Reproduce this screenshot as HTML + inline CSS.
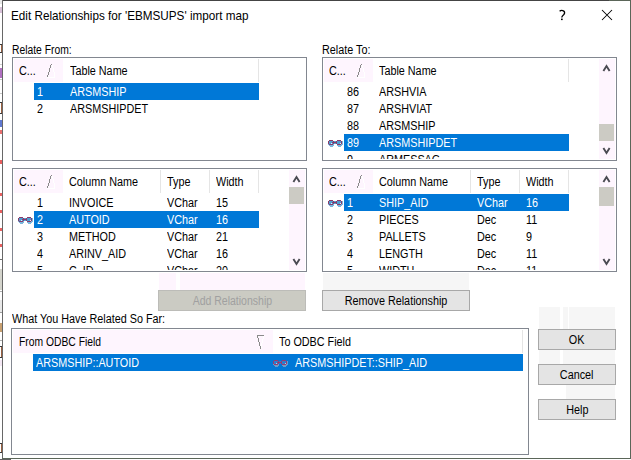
<!DOCTYPE html>
<html><head><meta charset="utf-8"><style>
html,body{margin:0;padding:0;width:631px;height:460px;overflow:hidden;background:#fff;}
body{position:relative;font-family:"Liberation Sans",sans-serif;}
.a{position:absolute;box-sizing:content-box;}
.t{position:absolute;white-space:nowrap;font-size:12px;line-height:14px;transform-origin:0 0;}
.c{text-align:center;}
</style></head><body>
<div class="a" style="left:0px;top:0px;width:631px;height:460px;background:#fff;"></div>
<div class="a" style="left:2px;top:0px;width:629px;height:1px;background:#444;"></div>
<div class="a" style="left:609px;top:0px;width:22px;height:1px;background:#5b6659;"></div>
<div class="a" style="left:2px;top:0px;width:1px;height:459px;background:#676767;"></div>
<div class="a" style="left:630px;top:0px;width:1px;height:459px;background:#5b6659;"></div>
<div class="a" style="left:2px;top:458px;width:629px;height:1px;background:#5b6659;"></div>
<div class="a" style="left:0px;top:0px;width:2px;height:4px;background:#e8e8e8;"></div>
<div class="a" style="left:0px;top:7px;width:2px;height:6px;background:#d8c0d8;"></div>
<div class="a" style="left:0px;top:64px;width:2px;height:1px;background:#d0d0d0;"></div>
<div class="a" style="left:0px;top:68px;width:2px;height:10px;background:#b070c0;"></div>
<div class="a" style="left:0px;top:79px;width:2px;height:1px;background:#c8c8c8;"></div>
<div class="a" style="left:0px;top:93px;width:2px;height:1px;background:#c8c8c8;"></div>
<div class="a" style="left:0px;top:120px;width:2px;height:7px;background:#6078d0;"></div>
<div class="a" style="left:0px;top:130px;width:2px;height:4px;background:#e87070;"></div>
<div class="a" style="left:0px;top:160px;width:2px;height:4px;background:#e86060;"></div>
<div class="a" style="left:0px;top:193px;width:2px;height:3px;background:#e86060;"></div>
<div class="a" style="left:0px;top:210px;width:2px;height:3px;background:#e86060;"></div>
<div class="a" style="left:0px;top:228px;width:2px;height:3px;background:#e86060;"></div>
<div class="a" style="left:0px;top:244px;width:2px;height:3px;background:#e86060;"></div>
<div class="a" style="left:0px;top:259px;width:2px;height:1px;background:#707070;"></div>
<div class="a" style="left:0px;top:269px;width:2px;height:21px;background:#d4d4cc;"></div>
<div class="a" style="left:0px;top:291px;width:2px;height:1px;background:#b0b0b0;"></div>
<div class="a" style="left:0px;top:300px;width:2px;height:12px;background:#e8e8e8;"></div>
<div class="a" style="left:0px;top:312px;width:2px;height:1px;background:#a0a0a0;"></div>
<div class="a" style="left:0px;top:323px;width:2px;height:9px;background:#c8a070;"></div>
<div class="a" style="left:0px;top:340px;width:2px;height:1px;background:#b0b0b0;"></div>
<div class="a" style="left:0px;top:360px;width:2px;height:6px;background:#f4e8f4;"></div>
<div class="a" style="left:0px;top:44px;width:2px;height:1px;background:#383838;"></div>
<div class="a" style="left:1px;top:45px;width:1px;height:7px;background:#9a6040;"></div>
<div class="a" style="left:0px;top:52px;width:2px;height:1px;background:#383838;"></div>
<div class="a" style="left:0px;top:102px;width:2px;height:1px;background:#383838;"></div>
<div class="a" style="left:1px;top:103px;width:1px;height:10px;background:#9a6040;"></div>
<div class="a" style="left:0px;top:113px;width:2px;height:1px;background:#383838;"></div>
<div class="a" style="left:0px;top:346px;width:2px;height:1px;background:#383838;"></div>
<div class="a" style="left:1px;top:347px;width:1px;height:10px;background:#9a6040;"></div>
<div class="a" style="left:0px;top:357px;width:2px;height:1px;background:#383838;"></div>
<div class="a" style="left:0px;top:443px;width:2px;height:1px;background:#383838;"></div>
<div class="a" style="left:1px;top:444px;width:1px;height:8px;background:#9a6040;"></div>
<div class="a" style="left:0px;top:452px;width:2px;height:1px;background:#383838;"></div>
<div class="a" style="left:0px;top:459px;width:11px;height:1px;background:#606060;"></div>
<div class="t" style="left:11px;top:8.5px;color:#000;font-size:12.6px;transform:scaleX(0.93);">Edit Relationships for &#39;EBMSUPS&#39; import map</div>
<svg class="a" style="left:555px;top:6px;" width="16" height="16"><path d="M4.6 5.3 C5.6 4.4 7.6 4.3 8.8 5.1 C10 6 9.8 7.7 8.6 8.7 C7.4 9.6 6.8 10.2 6.8 11.6" stroke="#000" stroke-width="1.35" fill="none"/><rect x="6" y="12.6" width="1.7" height="1.5" fill="#000"/></svg>
<svg class="a" style="left:601px;top:9px;" width="13" height="13"><path d="M1 1 L11 11 M11 1 L1 11" stroke="#000" stroke-width="1.05"/></svg>
<div class="t" style="left:12px;top:43px;color:#000;font-size:12px;transform:scaleX(0.86);">Relate From:</div>
<div class="t" style="left:322px;top:43px;color:#000;font-size:12px;transform:scaleX(0.9);">Relate To:</div>
<div class="a" style="left:12px;top:57px;width:293px;height:102px;border:1px solid #828790;background:#fff;"></div>
<div class="a" style="left:13px;top:58px;width:293px;height:101px;overflow:hidden">
<div class="a" style="left:1px;top:1px;width:49px;height:23px;background:#fef5fe;"></div>
<div class="t" style="left:6px;top:6px;color:#000;font-size:12px;transform:scaleX(0.9);">C...</div>
<svg class="a" style="left:34px;top:6px;" width="9" height="15"><g shape-rendering="crispEdges"><rect x="4" y="0" width="1" height="1" fill="#8a8a8a"/><rect x="3" y="1" width="1" height="3" fill="#8a8a8a"/><rect x="2" y="4" width="1" height="4" fill="#8a8a8a"/><rect x="1" y="8" width="1" height="3" fill="#8a8a8a"/><rect x="0" y="11" width="1" height="2" fill="#8a8a8a"/><rect x="5" y="1" width="1" height="3" fill="#fff"/><rect x="6" y="4" width="1" height="4" fill="#fff"/><rect x="7" y="8" width="1" height="5" fill="#fff"/><rect x="0" y="13" width="8" height="1" fill="#fff"/></g></svg>
<div class="t" style="left:57px;top:6px;color:#000;font-size:12px;transform:scaleX(0.9);">Table Name</div>
<div class="a" style="left:245px;top:1px;width:1px;height:23px;background:#e5e5e5;"></div>
<div class="a" style="left:21px;top:25px;width:225px;height:17px;background:#0078d7;"></div>
<div class="t" style="left:24px;top:27px;color:#fff;font-size:12px;transform:scaleX(0.9);">1</div>
<div class="t" style="left:57px;top:27px;color:#fff;font-size:12px;transform:scaleX(0.9);">ARSMSHIP</div>
<div class="t" style="left:24px;top:44px;color:#000;font-size:12px;transform:scaleX(0.9);">2</div>
<div class="t" style="left:57px;top:44px;color:#000;font-size:12px;transform:scaleX(0.9);">ARSMSHIPDET</div>
</div>
<div class="a" style="left:322px;top:57px;width:293px;height:102px;border:1px solid #828790;background:#fff;"></div>
<div class="a" style="left:323px;top:58px;width:293px;height:101px;overflow:hidden">
<div class="a" style="left:1px;top:1px;width:49px;height:23px;background:#fef5fe;"></div>
<div class="t" style="left:6px;top:6px;color:#000;font-size:12px;transform:scaleX(0.9);">C...</div>
<svg class="a" style="left:34px;top:6px;" width="9" height="15"><g shape-rendering="crispEdges"><rect x="4" y="0" width="1" height="1" fill="#8a8a8a"/><rect x="3" y="1" width="1" height="3" fill="#8a8a8a"/><rect x="2" y="4" width="1" height="4" fill="#8a8a8a"/><rect x="1" y="8" width="1" height="3" fill="#8a8a8a"/><rect x="0" y="11" width="1" height="2" fill="#8a8a8a"/><rect x="5" y="1" width="1" height="3" fill="#fff"/><rect x="6" y="4" width="1" height="4" fill="#fff"/><rect x="7" y="8" width="1" height="5" fill="#fff"/><rect x="0" y="13" width="8" height="1" fill="#fff"/></g></svg>
<div class="t" style="left:56px;top:6px;color:#000;font-size:12px;transform:scaleX(0.9);">Table Name</div>
<div class="a" style="left:245px;top:1px;width:1px;height:23px;background:#e5e5e5;"></div>
<div class="t" style="left:24px;top:27px;color:#000;font-size:12px;transform:scaleX(0.9);">86</div>
<div class="t" style="left:56px;top:27px;color:#000;font-size:12px;transform:scaleX(0.9);">ARSHVIA</div>
<div class="t" style="left:24px;top:44px;color:#000;font-size:12px;transform:scaleX(0.9);">87</div>
<div class="t" style="left:56px;top:44px;color:#000;font-size:12px;transform:scaleX(0.9);">ARSHVIAT</div>
<div class="t" style="left:24px;top:61px;color:#000;font-size:12px;transform:scaleX(0.9);">88</div>
<div class="t" style="left:56px;top:61px;color:#000;font-size:12px;transform:scaleX(0.9);">ARSMSHIP</div>
<div class="a" style="left:21px;top:76px;width:225px;height:17px;background:#0078d7;"></div>
<svg class="a" style="left:5px;top:82px;" width="16" height="8"><g shape-rendering="crispEdges"><rect x="1" y="1" width="4" height="3" fill="#4f9fd0"/><rect x="9" y="1" width="4" height="3" fill="#4f9fd0"/><rect x="6" y="1" width="2" height="3" fill="#4f9fd0"/><rect x="1" y="5" width="5" height="1" fill="#7ab8de"/><rect x="9" y="5" width="5" height="1" fill="#7ab8de"/><rect x="2" y="6" width="3" height="1" fill="#7ab8de"/><rect x="10" y="6" width="3" height="1" fill="#7ab8de"/><rect x="0" y="4" width="1" height="1" fill="#7ab8de"/><rect x="13" y="4" width="2" height="1" fill="#7ab8de"/><rect x="5" y="4" width="1" height="1" fill="#7ab8de"/><rect x="14" y="1" width="1" height="3" fill="#7ab8de"/><rect x="3" y="3" width="1" height="1" fill="#e4f2fa"/><rect x="12" y="3" width="1" height="1" fill="#e4f2fa"/><rect x="1" y="0" width="4" height="1" fill="#8a3a6c"/><rect x="9" y="0" width="4" height="1" fill="#8a3a6c"/><rect x="0" y="1" width="1" height="3" fill="#8a3a6c"/><rect x="13" y="1" width="1" height="3" fill="#8a3a6c"/><rect x="1" y="4" width="4" height="1" fill="#8a3a6c"/><rect x="9" y="4" width="4" height="1" fill="#8a3a6c"/><rect x="4" y="2" width="5" height="1" fill="#8a3a6c"/><rect x="5" y="1" width="1" height="1" fill="#8a3a6c"/><rect x="5" y="3" width="1" height="1" fill="#8a3a6c"/><rect x="8" y="1" width="1" height="1" fill="#8a3a6c"/><rect x="8" y="3" width="1" height="1" fill="#8a3a6c"/></g></svg>
<div class="t" style="left:24px;top:78px;color:#fff;font-size:12px;transform:scaleX(0.9);">89</div>
<div class="t" style="left:56px;top:78px;color:#fff;font-size:12px;transform:scaleX(0.9);">ARSMSHIPDET</div>
<div class="t" style="left:24px;top:95px;color:#000;font-size:12px;transform:scaleX(0.9);">9</div>
<div class="t" style="left:56px;top:95px;color:#000;font-size:12px;transform:scaleX(0.9);">ARMESSAG</div>
</div>
<div class="a" style="left:599px;top:59px;width:16px;height:100px;background:#fef5fe;"></div>
<div class="a" style="left:599px;top:124px;width:15px;height:17px;background:#cccbc4;"></div>
<svg class="a" style="left:602px;top:64px;" width="9" height="9"><path d="M1.4 6.9 L4.5 2.0 L7.6 6.9" stroke="#4a4a52" stroke-width="1.9" fill="none" stroke-linejoin="miter"/></svg>
<svg class="a" style="left:602px;top:147px;" width="9" height="9"><path d="M1.4 1.1 L4.5 6.0 L7.6 1.1" stroke="#4a4a52" stroke-width="1.9" fill="none" stroke-linejoin="miter"/></svg>
<div class="a" style="left:12px;top:168px;width:293px;height:102px;border:1px solid #828790;background:#fff;"></div>
<div class="a" style="left:13px;top:169px;width:293px;height:101px;overflow:hidden">
<div class="a" style="left:1px;top:1px;width:49px;height:23px;background:#fef5fe;"></div>
<div class="t" style="left:6px;top:6px;color:#000;font-size:12px;transform:scaleX(0.9);">C...</div>
<svg class="a" style="left:34px;top:6px;" width="9" height="15"><g shape-rendering="crispEdges"><rect x="4" y="0" width="1" height="1" fill="#8a8a8a"/><rect x="3" y="1" width="1" height="3" fill="#8a8a8a"/><rect x="2" y="4" width="1" height="4" fill="#8a8a8a"/><rect x="1" y="8" width="1" height="3" fill="#8a8a8a"/><rect x="0" y="11" width="1" height="2" fill="#8a8a8a"/><rect x="5" y="1" width="1" height="3" fill="#fff"/><rect x="6" y="4" width="1" height="4" fill="#fff"/><rect x="7" y="8" width="1" height="5" fill="#fff"/><rect x="0" y="13" width="8" height="1" fill="#fff"/></g></svg>
<div class="t" style="left:56px;top:6px;color:#000;font-size:12px;transform:scaleX(0.9);">Column Name</div>
<div class="a" style="left:147px;top:1px;width:1px;height:23px;background:#e5e5e5;"></div>
<div class="t" style="left:154px;top:6px;color:#000;font-size:12px;transform:scaleX(0.9);">Type</div>
<div class="a" style="left:196px;top:1px;width:1px;height:23px;background:#e5e5e5;"></div>
<div class="t" style="left:203px;top:6px;color:#000;font-size:12px;transform:scaleX(0.9);">Width</div>
<div class="a" style="left:245px;top:1px;width:1px;height:23px;background:#e5e5e5;"></div>
<div class="t" style="left:24px;top:27px;color:#000;font-size:12px;transform:scaleX(0.9);">1</div>
<div class="t" style="left:56px;top:27px;color:#000;font-size:12px;transform:scaleX(0.9);">INVOICE</div>
<div class="t" style="left:154px;top:27px;color:#000;font-size:12px;transform:scaleX(0.9);">VChar</div>
<div class="t" style="left:203px;top:27px;color:#000;font-size:12px;transform:scaleX(0.9);">15</div>
<div class="a" style="left:21px;top:42px;width:225px;height:17px;background:#0078d7;"></div>
<svg class="a" style="left:5px;top:48px;" width="16" height="8"><g shape-rendering="crispEdges"><rect x="1" y="1" width="4" height="3" fill="#4f9fd0"/><rect x="9" y="1" width="4" height="3" fill="#4f9fd0"/><rect x="6" y="1" width="2" height="3" fill="#4f9fd0"/><rect x="1" y="5" width="5" height="1" fill="#7ab8de"/><rect x="9" y="5" width="5" height="1" fill="#7ab8de"/><rect x="2" y="6" width="3" height="1" fill="#7ab8de"/><rect x="10" y="6" width="3" height="1" fill="#7ab8de"/><rect x="0" y="4" width="1" height="1" fill="#7ab8de"/><rect x="13" y="4" width="2" height="1" fill="#7ab8de"/><rect x="5" y="4" width="1" height="1" fill="#7ab8de"/><rect x="14" y="1" width="1" height="3" fill="#7ab8de"/><rect x="3" y="3" width="1" height="1" fill="#e4f2fa"/><rect x="12" y="3" width="1" height="1" fill="#e4f2fa"/><rect x="1" y="0" width="4" height="1" fill="#8a3a6c"/><rect x="9" y="0" width="4" height="1" fill="#8a3a6c"/><rect x="0" y="1" width="1" height="3" fill="#8a3a6c"/><rect x="13" y="1" width="1" height="3" fill="#8a3a6c"/><rect x="1" y="4" width="4" height="1" fill="#8a3a6c"/><rect x="9" y="4" width="4" height="1" fill="#8a3a6c"/><rect x="4" y="2" width="5" height="1" fill="#8a3a6c"/><rect x="5" y="1" width="1" height="1" fill="#8a3a6c"/><rect x="5" y="3" width="1" height="1" fill="#8a3a6c"/><rect x="8" y="1" width="1" height="1" fill="#8a3a6c"/><rect x="8" y="3" width="1" height="1" fill="#8a3a6c"/></g></svg>
<div class="t" style="left:24px;top:44px;color:#fff;font-size:12px;transform:scaleX(0.9);">2</div>
<div class="t" style="left:56px;top:44px;color:#fff;font-size:12px;transform:scaleX(0.9);">AUTOID</div>
<div class="t" style="left:154px;top:44px;color:#fff;font-size:12px;transform:scaleX(0.9);">VChar</div>
<div class="t" style="left:203px;top:44px;color:#fff;font-size:12px;transform:scaleX(0.9);">16</div>
<div class="t" style="left:24px;top:61px;color:#000;font-size:12px;transform:scaleX(0.9);">3</div>
<div class="t" style="left:56px;top:61px;color:#000;font-size:12px;transform:scaleX(0.9);">METHOD</div>
<div class="t" style="left:154px;top:61px;color:#000;font-size:12px;transform:scaleX(0.9);">VChar</div>
<div class="t" style="left:203px;top:61px;color:#000;font-size:12px;transform:scaleX(0.9);">21</div>
<div class="t" style="left:24px;top:78px;color:#000;font-size:12px;transform:scaleX(0.9);">4</div>
<div class="t" style="left:56px;top:78px;color:#000;font-size:12px;transform:scaleX(0.9);">ARINV_AID</div>
<div class="t" style="left:154px;top:78px;color:#000;font-size:12px;transform:scaleX(0.9);">VChar</div>
<div class="t" style="left:203px;top:78px;color:#000;font-size:12px;transform:scaleX(0.9);">16</div>
<div class="t" style="left:24px;top:95px;color:#000;font-size:12px;transform:scaleX(0.9);">5</div>
<div class="t" style="left:56px;top:95px;color:#000;font-size:12px;transform:scaleX(0.9);">C_ID</div>
<div class="t" style="left:154px;top:95px;color:#000;font-size:12px;transform:scaleX(0.9);">VChar</div>
<div class="t" style="left:203px;top:95px;color:#000;font-size:12px;transform:scaleX(0.9);">20</div>
</div>
<div class="a" style="left:289px;top:170px;width:16px;height:100px;background:#fef5fe;"></div>
<div class="a" style="left:289px;top:187px;width:15px;height:17px;background:#cccbc4;"></div>
<svg class="a" style="left:292px;top:175px;" width="9" height="9"><path d="M1.4 6.9 L4.5 2.0 L7.6 6.9" stroke="#4a4a52" stroke-width="1.9" fill="none" stroke-linejoin="miter"/></svg>
<svg class="a" style="left:292px;top:258px;" width="9" height="9"><path d="M1.4 1.1 L4.5 6.0 L7.6 1.1" stroke="#4a4a52" stroke-width="1.9" fill="none" stroke-linejoin="miter"/></svg>
<div class="a" style="left:322px;top:168px;width:293px;height:102px;border:1px solid #828790;background:#fff;"></div>
<div class="a" style="left:323px;top:169px;width:293px;height:101px;overflow:hidden">
<div class="a" style="left:1px;top:1px;width:49px;height:23px;background:#fef5fe;"></div>
<div class="t" style="left:6px;top:6px;color:#000;font-size:12px;transform:scaleX(0.9);">C...</div>
<svg class="a" style="left:34px;top:6px;" width="9" height="15"><g shape-rendering="crispEdges"><rect x="4" y="0" width="1" height="1" fill="#8a8a8a"/><rect x="3" y="1" width="1" height="3" fill="#8a8a8a"/><rect x="2" y="4" width="1" height="4" fill="#8a8a8a"/><rect x="1" y="8" width="1" height="3" fill="#8a8a8a"/><rect x="0" y="11" width="1" height="2" fill="#8a8a8a"/><rect x="5" y="1" width="1" height="3" fill="#fff"/><rect x="6" y="4" width="1" height="4" fill="#fff"/><rect x="7" y="8" width="1" height="5" fill="#fff"/><rect x="0" y="13" width="8" height="1" fill="#fff"/></g></svg>
<div class="t" style="left:56px;top:6px;color:#000;font-size:12px;transform:scaleX(0.9);">Column Name</div>
<div class="a" style="left:147px;top:1px;width:1px;height:23px;background:#e5e5e5;"></div>
<div class="t" style="left:154px;top:6px;color:#000;font-size:12px;transform:scaleX(0.9);">Type</div>
<div class="a" style="left:196px;top:1px;width:1px;height:23px;background:#e5e5e5;"></div>
<div class="t" style="left:203px;top:6px;color:#000;font-size:12px;transform:scaleX(0.9);">Width</div>
<div class="a" style="left:245px;top:1px;width:1px;height:23px;background:#e5e5e5;"></div>
<div class="a" style="left:21px;top:25px;width:225px;height:17px;background:#0078d7;"></div>
<svg class="a" style="left:5px;top:31px;" width="16" height="8"><g shape-rendering="crispEdges"><rect x="1" y="1" width="4" height="3" fill="#4f9fd0"/><rect x="9" y="1" width="4" height="3" fill="#4f9fd0"/><rect x="6" y="1" width="2" height="3" fill="#4f9fd0"/><rect x="1" y="5" width="5" height="1" fill="#7ab8de"/><rect x="9" y="5" width="5" height="1" fill="#7ab8de"/><rect x="2" y="6" width="3" height="1" fill="#7ab8de"/><rect x="10" y="6" width="3" height="1" fill="#7ab8de"/><rect x="0" y="4" width="1" height="1" fill="#7ab8de"/><rect x="13" y="4" width="2" height="1" fill="#7ab8de"/><rect x="5" y="4" width="1" height="1" fill="#7ab8de"/><rect x="14" y="1" width="1" height="3" fill="#7ab8de"/><rect x="3" y="3" width="1" height="1" fill="#e4f2fa"/><rect x="12" y="3" width="1" height="1" fill="#e4f2fa"/><rect x="1" y="0" width="4" height="1" fill="#8a3a6c"/><rect x="9" y="0" width="4" height="1" fill="#8a3a6c"/><rect x="0" y="1" width="1" height="3" fill="#8a3a6c"/><rect x="13" y="1" width="1" height="3" fill="#8a3a6c"/><rect x="1" y="4" width="4" height="1" fill="#8a3a6c"/><rect x="9" y="4" width="4" height="1" fill="#8a3a6c"/><rect x="4" y="2" width="5" height="1" fill="#8a3a6c"/><rect x="5" y="1" width="1" height="1" fill="#8a3a6c"/><rect x="5" y="3" width="1" height="1" fill="#8a3a6c"/><rect x="8" y="1" width="1" height="1" fill="#8a3a6c"/><rect x="8" y="3" width="1" height="1" fill="#8a3a6c"/></g></svg>
<div class="t" style="left:24px;top:27px;color:#fff;font-size:12px;transform:scaleX(0.9);">1</div>
<div class="t" style="left:56px;top:27px;color:#fff;font-size:12px;transform:scaleX(0.9);">SHIP_AID</div>
<div class="t" style="left:154px;top:27px;color:#fff;font-size:12px;transform:scaleX(0.9);">VChar</div>
<div class="t" style="left:203px;top:27px;color:#fff;font-size:12px;transform:scaleX(0.9);">16</div>
<div class="t" style="left:24px;top:44px;color:#000;font-size:12px;transform:scaleX(0.9);">2</div>
<div class="t" style="left:56px;top:44px;color:#000;font-size:12px;transform:scaleX(0.9);">PIECES</div>
<div class="t" style="left:154px;top:44px;color:#000;font-size:12px;transform:scaleX(0.9);">Dec</div>
<div class="t" style="left:203px;top:44px;color:#000;font-size:12px;transform:scaleX(0.9);">11</div>
<div class="t" style="left:24px;top:61px;color:#000;font-size:12px;transform:scaleX(0.9);">3</div>
<div class="t" style="left:56px;top:61px;color:#000;font-size:12px;transform:scaleX(0.9);">PALLETS</div>
<div class="t" style="left:154px;top:61px;color:#000;font-size:12px;transform:scaleX(0.9);">Dec</div>
<div class="t" style="left:203px;top:61px;color:#000;font-size:12px;transform:scaleX(0.9);">9</div>
<div class="t" style="left:24px;top:78px;color:#000;font-size:12px;transform:scaleX(0.9);">4</div>
<div class="t" style="left:56px;top:78px;color:#000;font-size:12px;transform:scaleX(0.9);">LENGTH</div>
<div class="t" style="left:154px;top:78px;color:#000;font-size:12px;transform:scaleX(0.9);">Dec</div>
<div class="t" style="left:203px;top:78px;color:#000;font-size:12px;transform:scaleX(0.9);">11</div>
<div class="t" style="left:24px;top:95px;color:#000;font-size:12px;transform:scaleX(0.9);">5</div>
<div class="t" style="left:56px;top:95px;color:#000;font-size:12px;transform:scaleX(0.9);">WIDTH</div>
<div class="t" style="left:154px;top:95px;color:#000;font-size:12px;transform:scaleX(0.9);">Dec</div>
<div class="t" style="left:203px;top:95px;color:#000;font-size:12px;transform:scaleX(0.9);">11</div>
</div>
<div class="a" style="left:599px;top:170px;width:16px;height:100px;background:#fef5fe;"></div>
<div class="a" style="left:599px;top:187px;width:15px;height:19px;background:#cccbc4;"></div>
<svg class="a" style="left:602px;top:175px;" width="9" height="9"><path d="M1.4 6.9 L4.5 2.0 L7.6 6.9" stroke="#4a4a52" stroke-width="1.9" fill="none" stroke-linejoin="miter"/></svg>
<svg class="a" style="left:602px;top:258px;" width="9" height="9"><path d="M1.4 1.1 L4.5 6.0 L7.6 1.1" stroke="#4a4a52" stroke-width="1.9" fill="none" stroke-linejoin="miter"/></svg>
<div class="a" style="left:159px;top:273px;width:17px;height:17px;background:#fef5fe;"></div>
<div class="a" style="left:180px;top:273px;width:125px;height:17px;background:#fef5fe;"></div>
<div class="a" style="left:323px;top:273px;width:146px;height:17px;background:#f6f6f6;"></div>
<div class="a" style="left:158px;top:290px;width:146px;height:19px;border:1px solid #bcbcb8;background:#cbcbc3;"></div>
<div class="t c" style="left:158px;width:148px;top:294px;color:#a0a0a0"><span style="display:inline-block;transform:scaleX(0.875)">Add Relationship</span></div>
<div class="a" style="left:322px;top:290px;width:146px;height:19px;border:1px solid #a8a8a8;background:#e4e4e4;"></div>
<div class="t c" style="left:322px;width:148px;top:294px;color:#000"><span style="display:inline-block;transform:scaleX(0.9)">Remove Relationship</span></div>
<div class="t" style="left:12px;top:312px;color:#000;font-size:12px;transform:scaleX(0.9);">What You Have Related So Far:</div>
<div class="a" style="left:11px;top:328px;width:516px;height:125px;border:1px solid #828790;background:#fff;"></div>
<div class="a" style="left:13px;top:330px;width:260px;height:23px;background:#fef5fe;"></div>
<div class="t" style="left:19px;top:335px;color:#000;font-size:12px;transform:scaleX(0.86);">From ODBC Field</div>
<svg class="a" style="left:257px;top:335px;" width="9" height="15"><g shape-rendering="crispEdges"><rect x="0" y="0" width="7" height="1" fill="#8a8a8a"/><rect x="0" y="1" width="1" height="2" fill="#8a8a8a"/><rect x="1" y="3" width="1" height="4" fill="#8a8a8a"/><rect x="2" y="7" width="1" height="4" fill="#8a8a8a"/><rect x="3" y="11" width="1" height="3" fill="#8a8a8a"/><rect x="6" y="1" width="1" height="3" fill="#fff"/><rect x="5" y="4" width="1" height="4" fill="#fff"/><rect x="4" y="8" width="1" height="5" fill="#fff"/></g></svg>
<div class="t" style="left:279px;top:335px;color:#000;font-size:12px;transform:scaleX(0.9);">To ODBC Field</div>
<div class="a" style="left:522px;top:330px;width:1px;height:23px;background:#e5e5e5;"></div>
<div class="a" style="left:33px;top:354px;width:490px;height:17px;background:#0078d7;"></div>
<div class="t" style="left:36px;top:356px;color:#fff;font-size:12px;transform:scaleX(0.9);">ARSMSHIP::AUTOID</div>
<svg class="a" style="left:273px;top:360px;" width="16" height="8"><g shape-rendering="crispEdges"><rect x="1" y="1" width="4" height="3" fill="#2a80cc"/><rect x="9" y="1" width="4" height="3" fill="#2a80cc"/><rect x="6" y="1" width="2" height="3" fill="#2a80cc"/><rect x="1" y="5" width="5" height="1" fill="#6a9cc8"/><rect x="9" y="5" width="5" height="1" fill="#6a9cc8"/><rect x="2" y="6" width="3" height="1" fill="#6a9cc8"/><rect x="10" y="6" width="3" height="1" fill="#6a9cc8"/><rect x="0" y="4" width="1" height="1" fill="#6a9cc8"/><rect x="13" y="4" width="2" height="1" fill="#6a9cc8"/><rect x="5" y="4" width="1" height="1" fill="#6a9cc8"/><rect x="14" y="1" width="1" height="3" fill="#6a9cc8"/><rect x="3" y="3" width="1" height="1" fill="#b0d0f0"/><rect x="12" y="3" width="1" height="1" fill="#b0d0f0"/><rect x="1" y="0" width="4" height="1" fill="#9a3a70"/><rect x="9" y="0" width="4" height="1" fill="#9a3a70"/><rect x="0" y="1" width="1" height="3" fill="#9a3a70"/><rect x="13" y="1" width="1" height="3" fill="#9a3a70"/><rect x="1" y="4" width="4" height="1" fill="#9a3a70"/><rect x="9" y="4" width="4" height="1" fill="#9a3a70"/><rect x="4" y="2" width="5" height="1" fill="#9a3a70"/><rect x="5" y="1" width="1" height="1" fill="#9a3a70"/><rect x="5" y="3" width="1" height="1" fill="#9a3a70"/><rect x="8" y="1" width="1" height="1" fill="#9a3a70"/><rect x="8" y="3" width="1" height="1" fill="#9a3a70"/></g></svg>
<div class="t" style="left:295px;top:356px;color:#fff;font-size:12px;transform:scaleX(0.9);">ARSMSHIPDET::SHIP_AID</div>
<div class="a" style="left:539px;top:307px;width:21px;height:22px;background:#f6f6f6;"></div>
<div class="a" style="left:563px;top:307px;width:5px;height:22px;background:#f6f6f6;"></div>
<div class="a" style="left:569px;top:307px;width:46px;height:22px;background:#f6f6f6;"></div>
<div class="a" style="left:539px;top:350px;width:21px;height:14px;background:#f6f6f6;"></div>
<div class="a" style="left:563px;top:350px;width:52px;height:14px;background:#f6f6f6;"></div>
<div class="a" style="left:566px;top:385px;width:49px;height:14px;background:#f6f6f6;"></div>
<div class="a" style="left:538px;top:329px;width:76px;height:19px;border:1px solid #a8a8a8;background:#e4e4e4;"></div>
<div class="t c" style="left:538px;width:78px;top:333px;color:#000"><span style="display:inline-block;transform:scaleX(0.9)">OK</span></div>
<div class="a" style="left:538px;top:364px;width:76px;height:19px;border:1px solid #a8a8a8;background:#e4e4e4;"></div>
<div class="t c" style="left:538px;width:78px;top:368px;color:#000"><span style="display:inline-block;transform:scaleX(0.9)">Cancel</span></div>
<div class="a" style="left:538px;top:399px;width:76px;height:19px;border:1px solid #a8a8a8;background:#e4e4e4;"></div>
<div class="t c" style="left:538px;width:78px;top:403px;color:#000"><span style="display:inline-block;transform:scaleX(0.9)">Help</span></div>
</body></html>
